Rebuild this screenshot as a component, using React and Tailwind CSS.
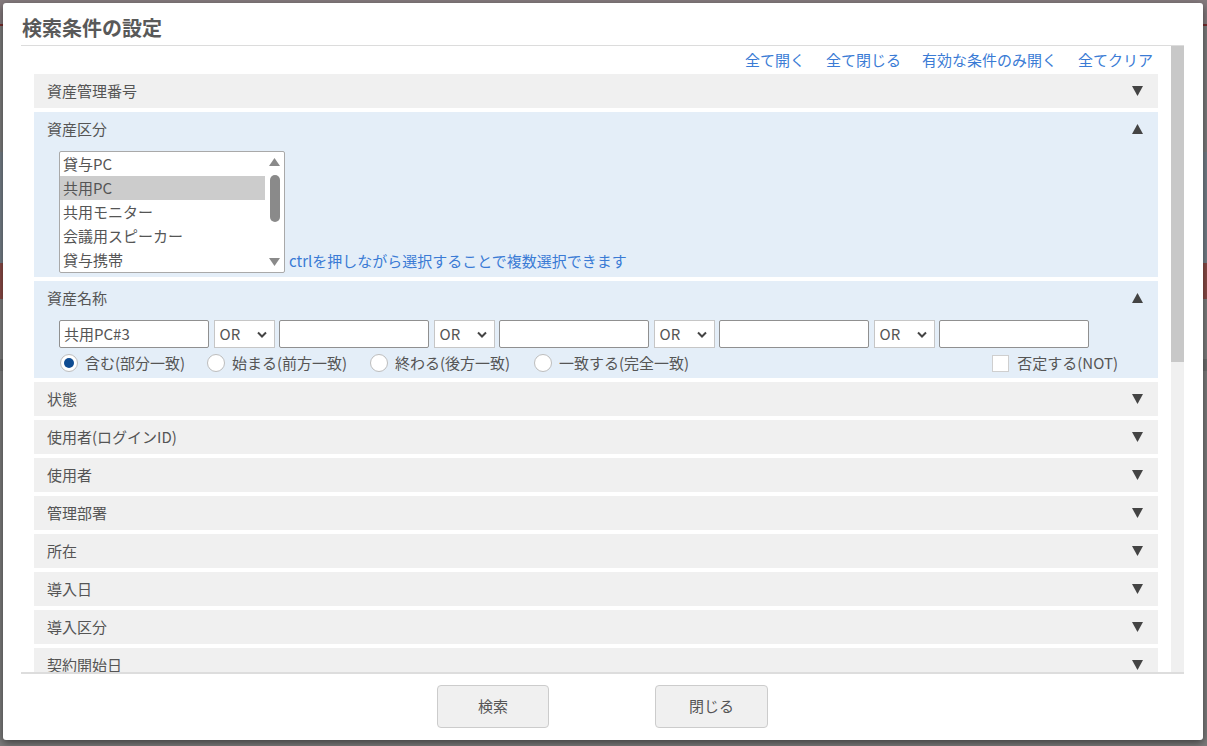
import { useState } from 'react';

const collapsed = ['状態', '使用者(ログインID)', '使用者', '管理部署', '所在', '導入日', '導入区分', '契約開始日'];
const kinds = ['貸与PC', '共用PC', '共用モニター', '会議用スピーカー', '貸与携帯'];
const matchModes = [
  { label: '含む(部分一致)', w: 'w-[147px]' },
  { label: '始まる(前方一致)', w: 'w-[163px]' },
  { label: '終わる(後方一致)', w: 'w-[164px]' },
  { label: '一致する(完全一致)', w: '' },
];

function Arrow({ up }) {
  return (
    <svg width="11" height="10" viewBox="0 0 11 10">
      <path d={up ? 'M0 10H11L5.5 0Z' : 'M0 0H11L5.5 10Z'} fill="#444" />
    </svg>
  );
}

function Header({ label, up }) {
  return (
    <div className="h-[34px] flex items-center pl-[13px] pr-[15px]">
      <span className="text-[15px] leading-[20px] text-[#555]">{label}</span>
      <span className="ml-auto flex"><Arrow up={up} /></span>
    </div>
  );
}

function OrSelect() {
  return (
    <div className="w-[61px] h-[28px] shrink-0 bg-white border border-[#c6c6c6] flex items-center pl-[5px] pr-[7px]">
      <span className="text-[15px] leading-[20px] text-[#555]">OR</span>
      <svg className="ml-auto" width="10" height="7" viewBox="0 0 10 7">
        <polyline points="1,1.5 5,5.5 9,1.5" fill="none" stroke="#444" strokeWidth="2" />
      </svg>
    </div>
  );
}

function TextBox({ value }) {
  return (
    <div className="w-[150px] h-[28px] shrink-0 bg-white border border-[#909090] rounded-[2px] flex items-center px-[4px]">
      <span className="text-[15px] leading-[20px] text-[#555]">{value}</span>
    </div>
  );
}

export default function App() {
  const [mode, setMode] = useState(0);

  return (
    <div className="relative w-[1207px] h-[746px] overflow-hidden bg-[#7d7d7d] font-['Noto_Sans_CJK_JP','Noto_Sans',sans-serif]">
      {/* dimmed page behind the dialog */}
      <div className="flex flex-col">
        <div className="h-[24px] bg-[#857b7e]" />
        <div className="h-[2px] bg-[#7a2e2e]" />
        <div className="h-[126px] bg-[#7e7e7e]" />
        <div className="h-[111px] bg-[#76808a]" />
        <div className="h-[36px] bg-[#8c4b47]" />
        <div className="h-[60px] bg-[#7f7f7f]" />
        <div className="h-[12px] bg-[#6f6f6f]" />
      </div>

      <div className="absolute left-[3px] top-[3px] w-[1200px] h-[737px] bg-white rounded-[3px] shadow-[0_3px_8px_rgba(0,0,0,0.5)] flex flex-col pl-[18px] pr-[19px]">
        <div className="h-[43px] shrink-0 border-b border-[#dcdcdc] pt-[12px]">
          <h1 className="text-[20px] leading-[26px] font-bold text-[#595959] pl-[1px]">検索条件の設定</h1>
        </div>

        <div className="flex h-[626px] shrink-0">
          <div className="flex-1 overflow-hidden px-[13px]">
            <div className="h-[28px] flex items-center justify-end gap-[21px] pr-[5px]">
              {['全て開く', '全て閉じる', '有効な条件のみ開く', '全てクリア'].map((t) => (
                <a key={t} className="text-[15px] leading-[20px] text-[#3a7bd5] cursor-pointer">{t}</a>
              ))}
            </div>

            <div className="flex flex-col gap-[4px]">
              <div className="bg-[#f0f0f0]">
                <Header label="資産管理番号" />
              </div>

              <div className="bg-[#e4eef8] pb-[4px]">
                <Header label="資産区分" up />
                <div className="flex items-end pl-[25px] mt-[5px]">
                  <div className="w-[226px] h-[122px] bg-white border border-[#a9a9a9] rounded-[2px] flex">
                    <div className="flex-1 flex flex-col">
                      {kinds.map((k, i) => (
                        <div key={k} className={`h-[24px] flex items-center px-[3px] text-[15px] leading-[20px] text-[#555] ${i === 1 ? 'bg-[#cccccc]' : ''}`}>
                          {k}
                        </div>
                      ))}
                    </div>
                    <div className="w-[19px] flex flex-col items-center pt-[6px] pb-[6px]">
                      <svg width="11" height="8" viewBox="0 0 11 8"><path d="M0 8H11L5.5 0Z" fill="#8a8a8a" /></svg>
                      <div className="w-[10px] h-[47px] mt-[9px] rounded-full bg-[#8a8a8a]" />
                      <svg className="mt-auto" width="11" height="8" viewBox="0 0 11 8"><path d="M0 0H11L5.5 8Z" fill="#8a8a8a" /></svg>
                    </div>
                  </div>
                  <span className="ml-[4px] mb-[2px] text-[15px] leading-[20px] text-[#3a7bd5]">ctrlを押しながら選択することで複数選択できます</span>
                </div>
              </div>

              <div className="bg-[#e4eef8]">
                <Header label="資産名称" up />
                <div className="flex items-center gap-[4.5px] pl-[25px] mt-[5px]">
                  <TextBox value="共用PC#3" />
                  <OrSelect />
                  <TextBox />
                  <OrSelect />
                  <TextBox />
                  <OrSelect />
                  <TextBox />
                  <OrSelect />
                  <TextBox />
                </div>
                <div className="h-[30px] flex items-center pl-[26px] pr-[40px]">
                  {matchModes.map((m, i) => (
                    <label key={m.label} className={`flex items-center cursor-pointer ${m.w}`} onClick={() => setMode(i)}>
                      <span className="w-[18px] h-[18px] shrink-0 rounded-full border border-[#bdbdbd] bg-white flex items-center justify-center">
                        {mode === i && <span className="w-[10px] h-[10px] rounded-full bg-[#0f4c92]" />}
                      </span>
                      <span className="ml-[7px] text-[15px] leading-[20px] text-[#555]">{m.label}</span>
                    </label>
                  ))}
                  <label className="ml-auto flex items-center">
                    <span className="w-[17px] h-[17px] border border-[#cfcfcf] bg-white" />
                    <span className="ml-[8px] text-[15px] leading-[20px] text-[#555]">否定する(NOT)</span>
                  </label>
                </div>
              </div>

              {collapsed.map((c) => (
                <div key={c} className="bg-[#f0f0f0]">
                  <Header label={c} />
                </div>
              ))}
            </div>
          </div>

          <div className="w-[13px] bg-[#f0f0f0]">
            <div className="h-[316px] bg-[#c8c8c8]" />
          </div>
        </div>

        <div className="flex-1 border-t-2 border-[#dddddd] flex justify-center gap-[106px] pt-[11px]">
          <button className="w-[112px] h-[43px] bg-[#f0f0f0] border border-[#cccccc] rounded-[4px] text-[15px] text-[#555]">検索</button>
          <button className="w-[113px] h-[43px] bg-[#f0f0f0] border border-[#cccccc] rounded-[4px] text-[15px] text-[#555]">閉じる</button>
        </div>
      </div>
    </div>
  );
}
